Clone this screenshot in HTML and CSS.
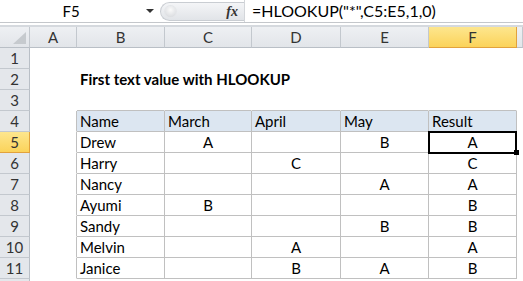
FILE: index.html
```html
<!DOCTYPE html>
<html lang="en">
<head>
  <meta charset="UTF-8">
  <title>First text value with HLOOKUP</title>
  <link rel="stylesheet" href="styles.css">
</head>
<body>
  <div class="fbar">
    <div class="namebox">
      <span class="ref">F5</span>
      <span class="arrow"></span>
    </div>
    <div class="fx-box">
      <span class="knob"></span>
      <span class="fx">fx</span>
    </div>
    <div class="formula">=HLOOKUP("*",C5:E5,1,0)</div>
  </div>
  <div class="fgap"></div>

  <div class="sheet">
    <div class="row head">
      <div class="corner"></div>
      <div class="ch">A</div>
      <div class="ch">B</div>
      <div class="ch">C</div>
      <div class="ch">D</div>
      <div class="ch">E</div>
      <div class="ch sel">F</div>
      <div class="ch"></div>
    </div>

    <div class="row">
      <div class="rh">1</div>
      <div class="c"></div><div class="c"></div><div class="c"></div><div class="c"></div><div class="c"></div><div class="c"></div><div class="c"></div>
    </div>
    <div class="row">
      <div class="rh">2</div>
      <div class="c"></div><div class="c title">First text value with HLOOKUP</div><div class="c"></div><div class="c"></div><div class="c"></div><div class="c"></div><div class="c"></div>
    </div>
    <div class="row">
      <div class="rh">3</div>
      <div class="c"></div><div class="c b"></div><div class="c b"></div><div class="c b"></div><div class="c b"></div><div class="c b"></div><div class="c"></div>
    </div>
    <div class="row">
      <div class="rh">4</div>
      <div class="c l"></div>
      <div class="c t th">Name</div><div class="c t th">March</div><div class="c t th">April</div><div class="c t th">May</div><div class="c t th">Result</div>
      <div class="c"></div>
    </div>
    <div class="row">
      <div class="rh sel">5</div>
      <div class="c l"></div>
      <div class="c t">Drew</div><div class="c t mid">A</div><div class="c t mid"></div><div class="c t mid">B</div><div class="c t mid active">A</div>
      <div class="c"></div>
    </div>
    <div class="row">
      <div class="rh">6</div>
      <div class="c l"></div>
      <div class="c t">Harry</div><div class="c t mid"></div><div class="c t mid">C</div><div class="c t mid"></div><div class="c t mid">C</div>
      <div class="c"></div>
    </div>
    <div class="row">
      <div class="rh">7</div>
      <div class="c l"></div>
      <div class="c t">Nancy</div><div class="c t mid"></div><div class="c t mid"></div><div class="c t mid">A</div><div class="c t mid">A</div>
      <div class="c"></div>
    </div>
    <div class="row">
      <div class="rh">8</div>
      <div class="c l"></div>
      <div class="c t">Ayumi</div><div class="c t mid">B</div><div class="c t mid"></div><div class="c t mid"></div><div class="c t mid">B</div>
      <div class="c"></div>
    </div>
    <div class="row">
      <div class="rh">9</div>
      <div class="c l"></div>
      <div class="c t">Sandy</div><div class="c t mid"></div><div class="c t mid"></div><div class="c t mid">B</div><div class="c t mid">B</div>
      <div class="c"></div>
    </div>
    <div class="row">
      <div class="rh">10</div>
      <div class="c l"></div>
      <div class="c t">Melvin</div><div class="c t mid"></div><div class="c t mid">A</div><div class="c t mid"></div><div class="c t mid">A</div>
      <div class="c"></div>
    </div>
    <div class="row">
      <div class="rh">11</div>
      <div class="c l"></div>
      <div class="c t">Janice</div><div class="c t mid"></div><div class="c t mid">B</div><div class="c t mid">A</div><div class="c t mid">B</div>
      <div class="c"></div>
    </div>
    <div class="row tail">
      <div class="rh"></div>
      <div class="c"></div><div class="c"></div><div class="c"></div><div class="c"></div><div class="c"></div><div class="c"></div><div class="c"></div>
    </div>
  </div>
</body>
</html>
```

FILE: styles.css
```css
body {
  margin: 0;
  width: 523px;
  height: 281px;
  overflow: hidden;
  background: #fff;
  font-family: Lato, "Liberation Sans", sans-serif;
  font-size: 15px;
  color: #000;
}

/* formula bar */
.fbar {
  display: flex;
  height: 22px;
  border-bottom: 1px solid #c4c7cb;
}
.namebox {
  width: 157px;
  display: flex;
  align-items: center;
}
.namebox .ref {
  flex: 1;
  text-align: center;
  padding-right: 4px;
}
.namebox .arrow {
  width: 0;
  height: 0;
  border-left: 4px solid transparent;
  border-right: 4px solid transparent;
  border-top: 4px solid #333;
  margin-right: 3px;
}
.fx-box {
  width: 84px;
  height: 19px;
  margin-top: 2px;
  margin-left: 3px;
  box-sizing: border-box;
  border: 1px solid #c9cdd2;
  border-right: none;
  border-radius: 10px 0 0 10px;
  background: linear-gradient(#f4f5f7, #e1e4e8);
  display: flex;
  align-items: center;
  justify-content: space-between;
  padding: 0 6px 0 4px;
}
.knob {
  width: 11px;
  height: 11px;
  border-radius: 50%;
  background: radial-gradient(circle at 50% 35%, #fafafa, #d3d6da);
  box-shadow: 0 0 0 1px #e4e6e9;
}
.fx {
  font-family: "Liberation Serif", serif;
  font-style: italic;
  font-weight: bold;
  font-size: 14px;
  color: #333;
}
.formula {
  flex: 1;
  border-left: 1px solid #d3d6da;
  padding-left: 7px;
  font-size: 16px;
  line-height: 22px;
  white-space: nowrap;
}
.fgap {
  height: 2px;
  border-bottom: 2px solid #d5d9de;
}

/* grid */
.row {
  display: grid;
  grid-template-columns: 30px 47px 88px 87px 89px 88px 88px 1fr;
  height: 21px;
}
.row.tail {
  height: 3px;
}
.row > div {
  box-sizing: border-box;
  border-right: 1px solid transparent;
  border-bottom: 1px solid transparent;
  line-height: 20px;
  white-space: nowrap;
}
.head > div {
  background: linear-gradient(#eef0f3, #e2e5e9);
  border-right-color: #c3c8ce;
  border-bottom-color: #b9bfc6;
  text-align: center;
  color: #333;
}
.head .corner {
  position: relative;
}
.head .corner::after {
  content: "";
  position: absolute;
  right: 3px;
  bottom: 3px;
  border-left: 13px solid transparent;
  border-bottom: 12px solid #c6cace;
}
.rh {
  background: #e4e7eb;
  border-right-color: #b9bfc6 !important;
  border-bottom-color: #c3c8ce !important;
  text-align: center;
  color: #333;
}
.head .sel,
.rh.sel {
  background: linear-gradient(#fde68e, #fbd35a);
  border-right-color: #e2a23c !important;
  border-bottom-color: #e2a23c !important;
}
.c.l {
  border-right-color: #c0c0c0;
}
.c.b {
  border-bottom-color: #c0c0c0;
}
.c.t {
  border-right-color: #c0c0c0;
  border-bottom-color: #c0c0c0;
  padding-left: 3px;
}
.c.th {
  background: #dce6f1;
}
.c.mid {
  text-align: center;
  padding-left: 0;
}
.title {
  font-weight: bold;
  padding-left: 3px;
}
.active {
  position: relative;
}
.active::after {
  content: "";
  position: absolute;
  left: -1px;
  top: -1px;
  right: -1px;
  bottom: -2px;
  border: 2px solid #000;
}
.active::before {
  content: "";
  position: absolute;
  right: -3px;
  bottom: -3px;
  width: 5px;
  height: 5px;
  background: #000;
  z-index: 1;
}
```
